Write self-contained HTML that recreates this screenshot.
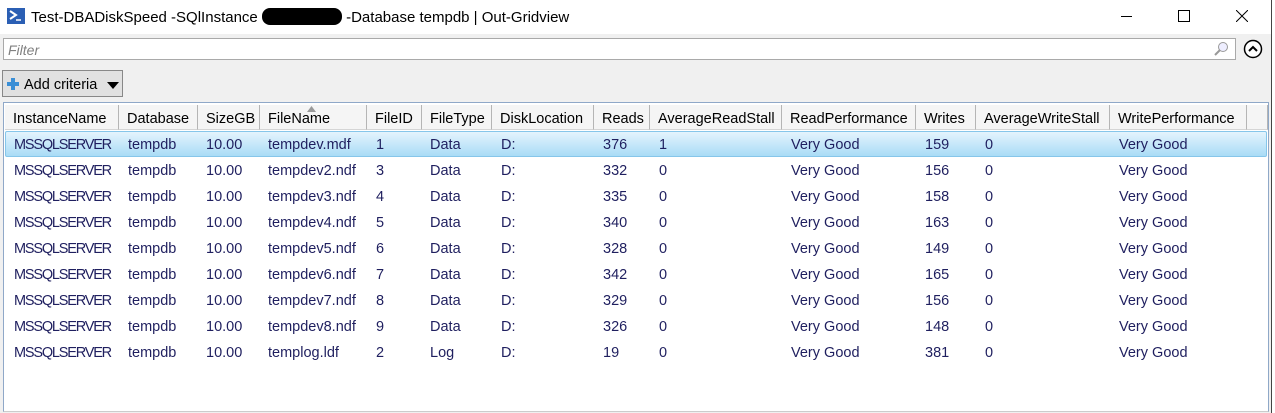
<!DOCTYPE html>
<html><head><style>
*{margin:0;padding:0;box-sizing:border-box}
body{width:1275px;height:413px;overflow:hidden;background:#f0f0f0;font-family:"Liberation Sans",sans-serif;position:relative}
.title{position:absolute;left:0;top:0;width:1271px;height:34px;background:#fff}
.tt{position:absolute;left:31px;top:8px;font-size:15px;color:#000}
.edge{position:absolute;left:1271px;top:0;width:4px;height:413px;background:#fff;border-left:1px solid #444}
.filter{position:absolute;left:3px;top:38px;width:1233px;height:22px;background:#fff;border:1px solid #a9a9a9}
.filter span{position:absolute;left:4px;top:3px;font-style:italic;color:#808080;font-size:14px}
.btn{position:absolute;left:2px;top:70px;width:121px;height:27px;background:#e1e1e1;border:1px solid #888}
.grid{position:absolute;left:3px;top:102px;width:1266px;height:310px;background:#fff;border:1px solid #8fa8c8;border-bottom-color:#ccc}
.hdr{position:absolute;top:105px;height:25px;background:#f5f5f5;border-right:1px solid #b5b5b5;border-bottom:1px solid #d5d5d5;font-size:14.5px;color:#000;padding:6px 0 0 8px;white-space:nowrap}
.sel{position:absolute;left:5px;top:131px;width:1262px;height:26px;background:linear-gradient(#e4f4fd,#a9dcf6);border:1px solid #86c6ea;border-radius:2px}
.c{position:absolute;font-size:14.5px;color:#1f1f5f;white-space:nowrap}
</style></head><body>
<div class="title">
<svg style="position:absolute;left:7px;top:8px" width="18" height="16"><rect width="18" height="16" fill="#2b5fb4"/><path d="M3 3l6 4-6 4" stroke="#fff" stroke-width="2" fill="none"/><path d="M9 12h5" stroke="#fff" stroke-width="1.5"/></svg>
<div class="tt">Test-DBADiskSpeed -SQlInstance <span style="display:inline-block;width:80px;height:17px;background:#000;border-radius:8px;vertical-align:-3px"></span> -Database tempdb | Out-Gridview</div>
<div style="position:absolute;left:1121px;top:16px;width:11px;height:1px;background:#000"></div>
<div style="position:absolute;left:1178px;top:10px;width:12px;height:12px;border:1px solid #000"></div>
<svg style="position:absolute;left:1236px;top:10px" width="12" height="12"><path d="M0 0L12 12M12 0L0 12" stroke="#000"/></svg>
</div>
<div class="edge"></div>
<div class="filter"><span>Filter</span>
<svg style="position:absolute;right:6px;top:2px" width="16" height="16"><circle cx="10" cy="6" r="4.5" fill="#eef" stroke="#999"/><path d="M7 9L2 14" stroke="#999" stroke-width="2"/></svg></div>
<svg style="position:absolute;left:1243px;top:39px" width="20" height="20"><circle cx="10" cy="10" r="8.5" fill="#fff" stroke="#000" stroke-width="1.5"/><path d="M6 12l4-4 4 4" stroke="#000" stroke-width="2" fill="none"/></svg>
<div class="btn">
<svg style="position:absolute;left:4px;top:7px" width="12" height="12"><path d="M6 0v12M0 6h12" stroke="#3b8fd6" stroke-width="4"/></svg>
<span style="position:absolute;left:21px;top:6px;font-size:14.5px">Add criteria</span>
<svg style="position:absolute;left:104px;top:11px" width="12" height="7"><path d="M0 0h12L6 7z"/></svg>
</div>
<div class="grid"></div>
<div class="hdr" style="left:5px;width:114px">InstanceName</div>
<div class="hdr" style="left:119px;width:79px">Database</div>
<div class="hdr" style="left:198px;width:62px">SizeGB</div>
<div class="hdr" style="left:260px;width:107px">FileName<svg style="position:absolute;left:47px;top:1px" width="9" height="6"><path d="M0 6L4.5 0 9 6z" fill="#999"/></svg></div>
<div class="hdr" style="left:367px;width:55px">FileID</div>
<div class="hdr" style="left:422px;width:70px">FileType</div>
<div class="hdr" style="left:492px;width:102px">DiskLocation</div>
<div class="hdr" style="left:594px;width:56px">Reads</div>
<div class="hdr" style="left:650px;width:132px">AverageReadStall</div>
<div class="hdr" style="left:782px;width:134px">ReadPerformance</div>
<div class="hdr" style="left:916px;width:60px">Writes</div>
<div class="hdr" style="left:976px;width:134px">AverageWriteStall</div>
<div class="hdr" style="left:1110px;width:137px">WritePerformance</div>
<div class="hdr" style="left:1247px;width:21px"></div>
<div class="sel"></div>
<div id="rows"></div>
<script>
var d=[["tempdev.mdf",1,"Data",376,1,159],["tempdev2.ndf",3,"Data",332,0,156],["tempdev3.ndf",4,"Data",335,0,158],["tempdev4.ndf",5,"Data",340,0,163],["tempdev5.ndf",6,"Data",328,0,149],["tempdev6.ndf",7,"Data",342,0,165],["tempdev7.ndf",8,"Data",329,0,156],["tempdev8.ndf",9,"Data",326,0,148],["templog.ldf",2,"Log",19,0,381]];
var xs=[14,128,206,268,376,430,501,603,659,791,925,985,1119],h="";
d.forEach(function(r,i){var v=["MSSQLSERVER","tempdb","10.00",r[0],r[1],r[2],"D:",r[3],r[4],"Very Good",r[5],0,"Very Good"];var y=137+i*26;
v.forEach(function(t,j){h+='<div class="c" style="left:'+xs[j]+'px;top:'+y+'px'+(j==0?';letter-spacing:-1.2px':'')+'">'+t+'</div>'})});
document.getElementById("rows").innerHTML=h;
</script>
</body></html>
